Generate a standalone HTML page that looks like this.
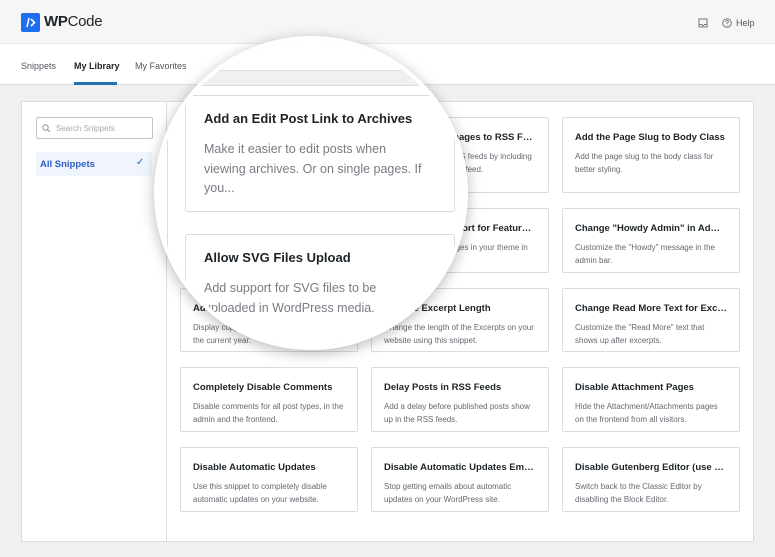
<!DOCTYPE html>
<html><head><meta charset="utf-8"><style>
*{box-sizing:border-box;margin:0;padding:0}
body{width:775px;height:557px;overflow:hidden;background:#f0f0f1;font-family:"Liberation Sans",Arial,sans-serif;position:relative;color:#1d2327}
.abs{position:absolute}
.hdr{left:0;top:0;width:775px;height:44px;background:#f6f6f6;border-bottom:1px solid #e8e8e8}
.tabs{left:0;top:44px;width:775px;height:41px;background:#fff;border-bottom:1px solid #dcdcde}
.tab{position:absolute;top:17px;font-size:9px;color:#50575e}
.panel{left:21px;top:101px;width:733px;height:441px;background:#fff;border:1px solid #dcdcde}
.card{position:absolute;width:178px;background:#fff;border:1px solid #dcdcde;border-radius:2px;padding:0 12px}
.card h4{font-size:9.5px;font-weight:bold;margin-top:14px;color:#1d2327;white-space:nowrap;overflow:hidden;text-overflow:ellipsis}
.card p{font-size:8px;line-height:12.5px;color:#646970;margin-top:8px}
.mag{left:154px;top:36px;width:314px;height:314px;border-radius:50%;overflow:hidden;background:#f0f0f1;border:4px solid #fff;box-shadow:0 3px 14px rgba(0,0,0,.28)}
.in{position:absolute;left:-158px;top:-40px;width:775px;height:557px}
.bc{position:absolute;background:#fff;border:1px solid #dcdcde;border-radius:3px;padding:0 18px}
.bc h3{font-size:13px;font-weight:bold;color:#1d2327;margin-top:15px;white-space:nowrap}
.bc p{font-size:12.5px;line-height:19.5px;color:#787c82;margin-top:14px;width:225px}
</style></head><body>
<div class="abs hdr">
 <div class="abs" style="left:21px;top:13px;width:19px;height:19px;background:#1e6ff0;border-radius:2px"><svg width="19" height="19"><path d="M8 5 L6 14 M10 6 L13.5 9.5 L10 13" stroke="#fff" stroke-width="1.6" fill="none"/></svg></div>
 <div class="abs" style="left:44px;top:13px;font-size:15px;color:#1d2327;letter-spacing:-.3px"><b>WP</b>Code</div>
 <svg class="abs" style="left:698px;top:18px" width="10" height="10"><rect x="1" y="1" width="8" height="8" fill="none" stroke="#777" stroke-width="1"/><path d="M1 6.5 H3.5 L4.5 7.5 H5.5 L6.5 6.5 H9" stroke="#777" fill="none"/></svg>
 <svg class="abs" style="left:722px;top:18px" width="10" height="10"><circle cx="5" cy="5" r="4.3" fill="none" stroke="#777"/><path d="M3.6 4 Q3.6 2.6 5 2.6 Q6.4 2.6 6.4 3.8 Q6.4 4.6 5 5.2 V6" stroke="#777" fill="none" stroke-width=".9"/><circle cx="5" cy="7.5" r=".5" fill="#777"/></svg>
 <div class="abs" style="left:736px;top:18px;font-size:9px;color:#50575e">Help</div>
</div>
<div class="abs tabs">
 <div class="tab" style="left:21px">Snippets</div>
 <div class="tab" style="left:74px;color:#1d2327;font-weight:bold">My Library</div>
 <div class="abs" style="left:74px;top:38px;width:43px;height:3px;background:#2271b1"></div>
 <div class="tab" style="left:135px">My Favorites</div>
</div>
<div class="abs panel">
 <div class="abs" style="left:144px;top:0;width:1px;height:439px;background:#dcdcde"></div>
 <div class="abs" style="left:14px;top:15px;width:117px;height:22px;border:1px solid #c3c4c7;border-radius:2px"><svg class="abs" style="left:5px;top:6px" width="9" height="9"><circle cx="3.5" cy="3.5" r="2.7" fill="none" stroke="#999"/><path d="M5.5 5.5 L8 8" stroke="#999"/></svg><span class="abs" style="left:19px;top:6px;font-size:8px;color:#a7aaad">Search Snippets</span></div>
 <div class="abs" style="left:14px;top:50px;width:116px;height:24px;background:#f0f4fc"><span class="abs" style="left:4px;top:7px;font-size:9.5px;font-weight:bold;color:#2a5fc1">All Snippets</span><span class="abs" style="left:100px;top:5px;font-size:10px;color:#2a5fc1">✓</span></div>
</div>
<div class="card" style="left:371px;top:117px;height:76px"><h4>Add Featured Images to RSS Feeds</h4><p>Extend your site's RSS feeds by including featured images in the feed.</p></div>
<div class="card" style="left:562px;top:117px;height:76px"><h4>Add the Page Slug to Body Class</h4><p>Add the page slug to the body class for better styling.</p></div>
<div class="card" style="left:371px;top:208px;height:65px"><h4>Add Theme Support for Featured Images</h4><p>Enable featured images in your theme in case it doesn't.</p></div>
<div class="card" style="left:562px;top:208px;height:65px"><h4>Change "Howdy Admin" in Admin Bar</h4><p>Customize the "Howdy" message in the admin bar.</p></div>
<div class="card" style="left:180px;top:288px;height:64px"><h4>Add Copyright Footer</h4><p>Display copyright notice in your footer with the current year.</p></div>
<div class="card" style="left:371px;top:288px;height:64px"><h4>Change Excerpt Length</h4><p>Change the length of the Excerpts on your website using this snippet.</p></div>
<div class="card" style="left:562px;top:288px;height:64px"><h4>Change Read More Text for Excerpts</h4><p>Customize the "Read More" text that shows up after excerpts.</p></div>
<div class="card" style="left:180px;top:367px;height:65px"><h4>Completely Disable Comments</h4><p>Disable comments for all post types, in the admin and the frontend.</p></div>
<div class="card" style="left:371px;top:367px;height:65px"><h4>Delay Posts in RSS Feeds</h4><p>Add a delay before published posts show up in the RSS feeds.</p></div>
<div class="card" style="left:562px;top:367px;height:65px"><h4>Disable Attachment Pages</h4><p>Hide the Attachment/Attachments pages on the frontend from all visitors.</p></div>
<div class="card" style="left:180px;top:447px;height:65px"><h4>Disable Automatic Updates</h4><p>Use this snippet to completely disable automatic updates on your website.</p></div>
<div class="card" style="left:371px;top:447px;height:65px"><h4>Disable Automatic Updates Emails</h4><p>Stop getting emails about automatic updates on your WordPress site.</p></div>
<div class="card" style="left:562px;top:447px;height:65px"><h4>Disable Gutenberg Editor (use Classic)</h4><p>Switch back to the Classic Editor by disablling the Block Editor.</p></div>
<div class="abs mag"><div class="in">
 <div class="abs" style="left:0;top:0;width:775px;height:70px;background:#fff"></div>
 <div class="abs" style="left:0;top:70px;width:775px;height:1px;background:#dcdcde"></div>
 <div class="abs" style="left:0;top:71px;width:775px;height:14px;background:#f0f0f1"></div>
 <div class="abs" style="left:0;top:85px;width:775px;height:472px;background:#fff;border-top:1px solid #dcdcde"></div>
 <div class="abs" style="left:167px;top:85px;width:1px;height:472px;background:#dcdcde"></div>
 <div class="bc" style="left:185px;top:95px;width:270px;height:117px"><h3>Add an Edit Post Link to Archives</h3><p>Make it easier to edit posts when viewing archives. Or on single pages. If you...</p></div>
 <div class="bc" style="left:185px;top:234px;width:270px;height:120px"><h3>Allow SVG Files Upload</h3><p>Add support for SVG files to be uploaded in WordPress media.</p></div>
</div></div>
</body></html>
